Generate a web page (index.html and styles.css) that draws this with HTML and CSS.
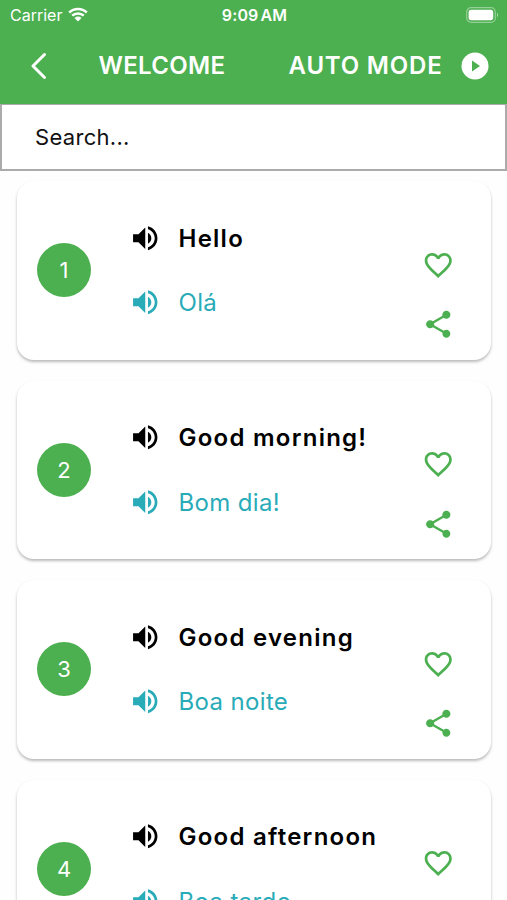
FILE: index.html
```html
<!DOCTYPE html>
<html lang="en">
<head>
    <meta charset="UTF-8">
    <meta name="viewport" content="width=device-width, initial-scale=1.0">
    <title>Welcome</title>
    <link rel="stylesheet" href="styles.css">
</head>
<body>
    <!-- Shared icons -->
    <svg class="sprite" width="0" height="0">
        <symbol id="icon-volume" viewBox="0 0 24 24">
            <path d="M3 9v6h4l5 5V4L7 9H3zm13.5 3c0-1.77-1.02-3.29-2.5-4.03v8.05c1.48-.73 2.5-2.25 2.5-4.02zM14 3.23v2.06c2.89.86 5 3.54 5 6.71s-2.11 5.85-5 6.71v2.06c4.01-.91 7-4.49 7-8.77s-2.99-7.86-7-8.77z"/>
        </symbol>
        <symbol id="icon-heart" viewBox="0 0 24 24">
            <path d="M16.5 3c-1.74 0-3.41.81-4.5 2.09C10.91 3.81 9.24 3 7.5 3 4.42 3 2 5.42 2 8.5c0 3.78 3.4 6.86 8.55 11.54L12 21.35l1.45-1.32C18.6 15.36 22 12.28 22 8.5 22 5.42 19.58 3 16.5 3zm-4.4 15.55l-.1.1-.1-.1C7.14 14.24 4 11.39 4 8.5 4 6.5 5.5 5 7.5 5c1.54 0 3.04.99 3.57 2.36h1.87C13.46 5.99 14.96 5 16.5 5c2 0 3.5 1.5 3.5 3.5 0 2.89-3.14 5.74-7.9 10.05z"/>
        </symbol>
        <symbol id="icon-share" viewBox="0 0 24 24">
            <path d="M18 16.08c-.76 0-1.44.3-1.96.77L8.91 12.7c.05-.23.09-.46.09-.7s-.04-.47-.09-.7l7.05-4.11c.54.5 1.25.81 2.04.81 1.66 0 3-1.34 3-3s-1.34-3-3-3-3 1.34-3 3c0 .24.04.47.09.7L8.04 9.81C7.5 9.31 6.79 9 6 9c-1.66 0-3 1.34-3 3s1.34 3 3 3c.79 0 1.5-.31 2.04-.81l7.12 4.16c-.05.21-.08.43-.08.65 0 1.61 1.31 2.92 2.92 2.92s2.92-1.31 2.92-2.92-1.31-2.92-2.92-2.92z"/>
        </symbol>
    </svg>

    <header class="header">
        <div class="status-bar">
            <div class="carrier">
                <span class="carrier-name">Carrier</span>
                <svg class="wifi" viewBox="0 0 20 15">
                    <path d="M1.2 5.5a12.8 12.8 0 0 1 17.6 0M4.2 8.7a8.4 8.4 0 0 1 11.6 0" fill="none" stroke="#fff" stroke-width="2.5"/>
                    <path d="M6.5 11a5.1 5.1 0 0 1 7 0L10 14.5z" fill="#fff"/>
                </svg>
            </div>
            <span class="time">9:09 AM</span>
            <svg class="battery" viewBox="0 0 33 16">
                <rect x=".7" y=".7" width="28.6" height="14.6" rx="4.4" fill="none" stroke="#fff" stroke-opacity=".4" stroke-width="1.2"/>
                <rect x="2.6" y="2.8" width="24.6" height="10.4" rx="2.6" fill="#fff"/>
                <path d="M31 5.8c1.6.7 1.6 3.7 0 4.4z" fill="#fff" fill-opacity=".5"/>
            </svg>
        </div>
        <div class="nav-bar">
            <svg class="back" viewBox="0 0 16 28">
                <path d="M13.5 2.5L2 14l11.5 11.5" fill="none" stroke="#fff" stroke-width="3" stroke-linecap="round" stroke-linejoin="round"/>
            </svg>
            <h1 class="title">WELCOME</h1>
            <span class="auto-mode">AUTO MODE</span>
            <svg class="play" viewBox="0 0 28 28">
                <circle cx="14" cy="14" r="13.5" fill="#fff"/>
                <path d="M11 8.4v11.2l8-5.6z" fill="#4caf50"/>
            </svg>
        </div>
    </header>

    <input class="search" type="text" placeholder="Search..." aria-label="Search">

    <main class="phrases">
        <div class="card">
            <div class="number">1</div>
            <div class="texts">
                <div class="phrase"><svg class="icon"><use href="#icon-volume"/></svg><span>Hello</span></div>
                <div class="phrase translation"><svg class="icon"><use href="#icon-volume"/></svg><span>Olá</span></div>
            </div>
            <div class="actions">
                <svg class="icon"><use href="#icon-heart"/></svg>
                <svg class="icon"><use href="#icon-share"/></svg>
            </div>
        </div>
        <div class="card">
            <div class="number">2</div>
            <div class="texts">
                <div class="phrase"><svg class="icon"><use href="#icon-volume"/></svg><span>Good morning!</span></div>
                <div class="phrase translation"><svg class="icon"><use href="#icon-volume"/></svg><span>Bom dia!</span></div>
            </div>
            <div class="actions">
                <svg class="icon"><use href="#icon-heart"/></svg>
                <svg class="icon"><use href="#icon-share"/></svg>
            </div>
        </div>
        <div class="card">
            <div class="number">3</div>
            <div class="texts">
                <div class="phrase"><svg class="icon"><use href="#icon-volume"/></svg><span>Good evening</span></div>
                <div class="phrase translation"><svg class="icon"><use href="#icon-volume"/></svg><span>Boa noite</span></div>
            </div>
            <div class="actions">
                <svg class="icon"><use href="#icon-heart"/></svg>
                <svg class="icon"><use href="#icon-share"/></svg>
            </div>
        </div>
        <div class="card">
            <div class="number">4</div>
            <div class="texts">
                <div class="phrase"><svg class="icon"><use href="#icon-volume"/></svg><span>Good afternoon</span></div>
                <div class="phrase translation"><svg class="icon"><use href="#icon-volume"/></svg><span>Boa tarde</span></div>
            </div>
            <div class="actions">
                <svg class="icon"><use href="#icon-heart"/></svg>
                <svg class="icon"><use href="#icon-share"/></svg>
            </div>
        </div>
    </main>
</body>
</html>
```
FILE: styles.css
```css
* {
    box-sizing: border-box;
}

body {
    margin: 0;
    height: 100vh;
    display: flex;
    flex-direction: column;
    overflow: hidden;
    background-color: #fefefe;
    color: #000;
    font-family: Inter, "Liberation Sans", sans-serif;
}

svg {
    display: block;
    flex: none;
}

.sprite {
    position: absolute;
}

/* Header */
.header {
    flex: none;
    height: 104px;
    background-color: #4caf50;
    color: #fff;
}

.status-bar {
    display: grid;
    grid-template-columns: 1fr auto 1fr;
    align-items: center;
    height: 28px;
    padding: 1px 8px 0 10px;
    font-size: 16px;
}

.carrier {
    display: flex;
    align-items: center;
    gap: 6px;
}

.carrier-name {
    letter-spacing: 0;
}

.wifi {
    width: 20px;
    height: 15px;
}

.time {
    font-weight: 600;
    word-spacing: -2px;
    letter-spacing: 0.1px;
}

.battery {
    width: 33px;
    height: 16px;
    justify-self: end;
}

.nav-bar {
    display: flex;
    align-items: center;
    height: 75px;
    padding: 0 18.5px 0 30.5px;
    font-size: 24px;
    font-weight: 600;
}

.back {
    width: 16px;
    height: 28px;
}

.title {
    margin: 0 0 0 52px;
    font-size: inherit;
    font-weight: inherit;
    letter-spacing: 0.3px;
}

.auto-mode {
    margin-left: auto;
    letter-spacing: 0.8px;
}

.play {
    width: 28px;
    height: 28px;
    margin-left: 18px;
}

/* Search */
.search {
    flex: none;
    width: 100%;
    height: 67px;
    padding: 0 33px;
    border: 2px solid #ababab;
    border-width: 1px 2px 2px;
    border-radius: 0;
    outline: none;
    background-color: #fff;
    font-family: inherit;
    font-size: 22px;
    letter-spacing: 0.3px;
}

.search::placeholder {
    color: #111;
    opacity: 1;
}

/* Phrase list */
.phrases {
    display: flex;
    flex-direction: column;
    gap: 21px;
    min-height: 0;
    padding: 10px 16.5px;
    overflow: hidden;
}

.card {
    flex: none;
    display: flex;
    align-items: center;
    height: 178.5px;
    padding: 0 36px 0 20.5px;
    border-radius: 17px;
    background-color: #fff;
    box-shadow: 0 2px 3px rgba(0, 0, 0, 0.27);
}

.number {
    display: flex;
    align-items: center;
    justify-content: center;
    width: 54px;
    height: 54px;
    border-radius: 50%;
    background-color: #4caf50;
    color: #fff;
    font-size: 22px;
}

.texts {
    display: flex;
    flex-direction: column;
    gap: 32px;
    margin-left: 38px;
}

.phrase {
    display: flex;
    align-items: center;
    gap: 17px;
    font-size: 24px;
    font-weight: 600;
    letter-spacing: 1.25px;
}

.translation {
    color: #29abb8;
    font-weight: 400;
    letter-spacing: 0.35px;
}

.icon {
    width: 32.5px;
    height: 32.5px;
    fill: currentColor;
}

.actions {
    display: flex;
    flex-direction: column;
    gap: 27px;
    margin-left: auto;
    padding-top: 49px;
    color: #4caf50;
}
```
